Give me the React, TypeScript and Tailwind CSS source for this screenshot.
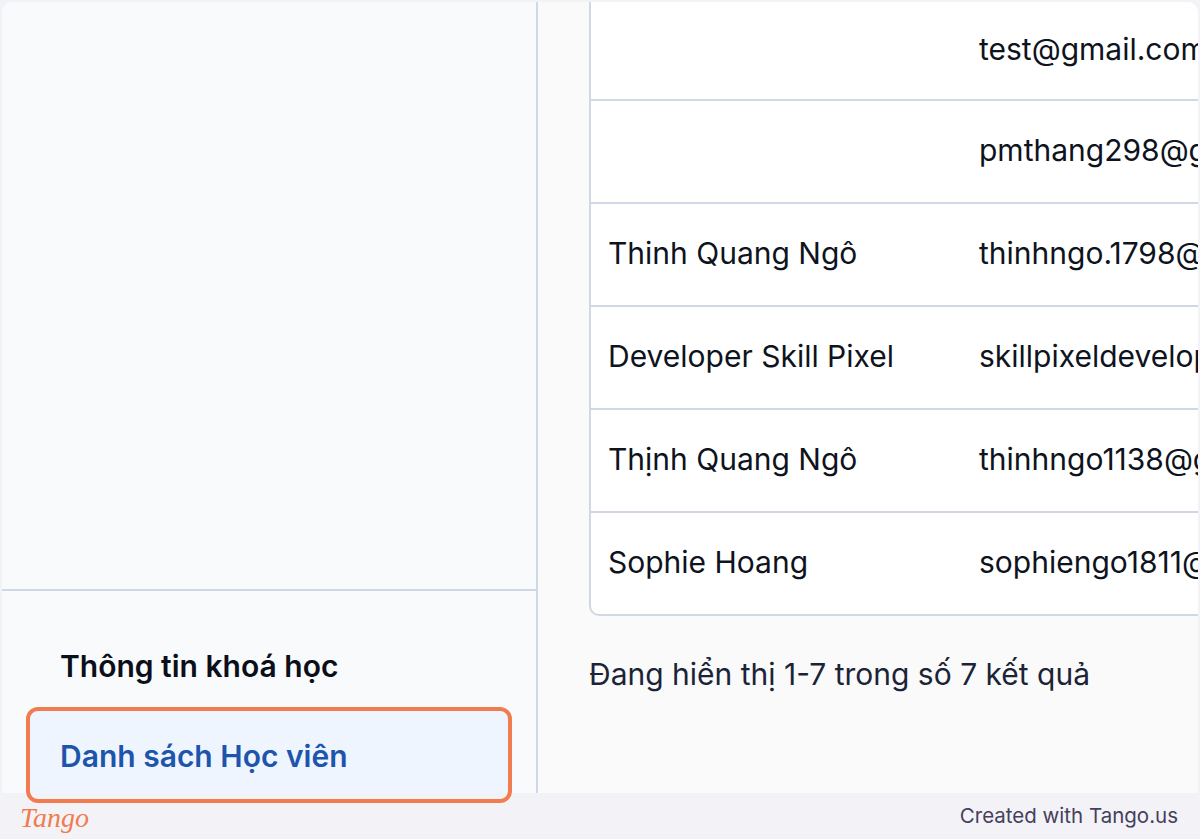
import { ReactNode } from "react"

type Student = { name: string; email: string }

const students: Student[] = [
  { name: "", email: "test@gmail.com" },
  { name: "", email: "pmthang298@gmail.com" },
  { name: "Thinh Quang Ngô", email: "thinhngo.1798@gmail.com" },
  { name: "Developer Skill Pixel", email: "skillpixeldeveloper@gmail.com" },
  { name: "Thịnh Quang Ngô", email: "thinhngo1138@gmail.com" },
  { name: "Sophie Hoang", email: "sophiengo1811@gmail.com" },
]

const font = "font-['Inter','Noto_Sans',sans-serif]"

function NavItem({ active, children }: { active?: boolean; children: ReactNode }) {
  return (
    <div
      className={`flex items-center h-[90px] shrink-0 pl-[30px] rounded-lg text-[30px] leading-[36px] font-semibold ${
        active ? "bg-[#eff5fe] text-[#1d55ad]" : "text-[#0b0f19]"
      }`}
    >
      {children}
    </div>
  )
}

function StudentRow({ s, first }: { s: Student; first?: boolean }) {
  return (
    <div
      className={`flex items-center pb-[3px] text-[30px] leading-[36px] text-[#0e1320] ${
        first ? "h-[97px]" : "h-[103px] border-t-2 border-[#cfd8e4]"
      }`}
    >
      <div className="w-[388px] shrink-0 pl-[17px] whitespace-nowrap">{s.name}</div>
      <div className="whitespace-nowrap">{s.email}</div>
    </div>
  )
}

export default function App() {
  return (
    <div className={`relative w-[1200px] h-[839px] bg-[#f3f2f7] flex flex-col ${font}`}>
      {/* khung ảnh chụp màn hình */}
      <div className="mx-[2px] mt-[2px] h-[791px] shrink-0 rounded-t-[10px] overflow-hidden flex">
        {/* sidebar */}
        <aside className="w-[536px] shrink-0 bg-[#f8fafc] border-r-2 border-[#cfd8e4] flex flex-col overflow-hidden">
          <div className="h-[589px] shrink-0 border-b-2 border-[#cfd8e4]" />
          <div className="px-[28px] pt-[30px] flex flex-col">
            <NavItem>Thông tin khoá học</NavItem>
            <NavItem active>Danh sách Học viên</NavItem>
          </div>
        </aside>

        {/* nội dung chính */}
        <main className="flex-1 bg-[#fafafa] pl-[51px] overflow-hidden">
          <div className="w-[900px] bg-white border-l-2 border-b-2 border-[#cfd8e4] rounded-bl-[10px]">
            {students.map((s, i) => (
              <StudentRow key={i} s={s} first={i === 0} />
            ))}
          </div>
          <div className="mt-[40px] text-[30px] leading-[36px] text-[#1b2437] whitespace-nowrap">
            Đang hiển thị 1-7 trong số 7 kết quả
          </div>
        </main>
      </div>

      {/* footer */}
      <div className="flex-1 flex items-center justify-between pl-[20px] pr-[22px]">
        <span className="font-['Liberation_Serif',serif] italic text-[28px] leading-none text-[#f07c4f] mt-[4px]">
          Tango
        </span>
        <span className="text-[20.5px] text-[#463f5c]">Created with Tango.us</span>
      </div>

      {/* khung đánh dấu */}
      <div className="absolute left-[26px] top-[707px] w-[486px] h-[96px] border-4 border-[#f07c4f] rounded-[12px] pointer-events-none" />
    </div>
  )
}
